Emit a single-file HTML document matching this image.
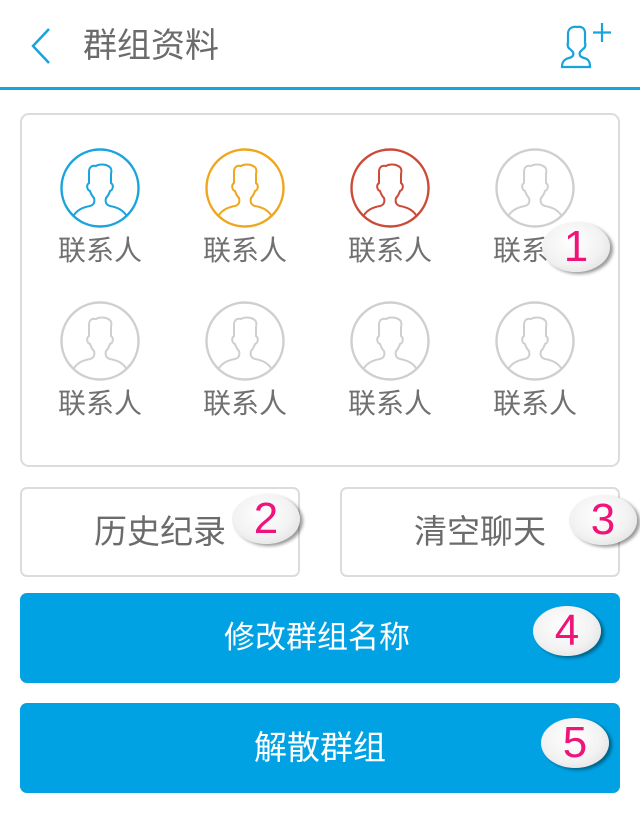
<!DOCTYPE html>
<html><head><meta charset="utf-8"><style>
*{margin:0;padding:0;box-sizing:border-box}
body{width:640px;height:828px;background:#fff;position:relative;overflow:hidden;font-family:"Liberation Sans","Noto Sans CJK SC",sans-serif}
.abs{position:absolute}
.title{left:83px;top:25px;font-size:34px;color:#6b6b6b;line-height:42px}
.line{left:0;top:87px;width:640px;height:3px;background:#18a3dd}
.box{left:20px;top:113px;width:600px;height:354px;border:2px solid #dcdcdc;border-radius:9px}
.av{width:80px;height:80px}
.lbl{width:140px;text-align:center;font-size:28px;color:#707070;line-height:30px}
.btn{border:2px solid #dcdcdc;border-radius:7px;font-size:33px;color:#6b6b6b;line-height:86px}
.blue{background:#00a2e3;border-radius:7px;color:#fff;font-size:31px;line-height:90px;width:600px;height:90px;left:20px}
.badge{width:68px;height:50px;border-radius:50%;background:radial-gradient(ellipse at 45% 40%,#fff 0%,#f2f2f2 55%,#d6d6d6 100%);box-shadow:3px 2px 3px rgba(0,0,0,.4);color:#f0147a;font-size:44px;text-align:center;line-height:50px;font-family:"Liberation Sans",sans-serif}
</style></head><body>
<svg class="abs" style="left:28px;top:26px" width="26" height="40"><path d="M21 3 L5 20 L21 37" fill="none" stroke="#18a3dd" stroke-width="2.5"/></svg>
<div class="abs title">群组资料</div>
<svg class="abs" style="left:558px;top:20px" width="66" height="52"><g fill="none" stroke="#18a3dd" stroke-width="2.2"><path d="M4 47 C4 41 7 39 11 38 C15 37 16 35 15 32 L12 29 C10 28 9 25 10 23 L10 14 C10 8 15 6 19 7 C23 6 27 8 27 13 L27 23 C28 25 27 28 25 29 L22 32 C21 35 22 37 26 38 C30 39 32 41 32 47 Z"/><path d="M44 3 V22 M35 12.5 H53"/></g></svg>
<div class="abs line"></div>
<div class="abs box"></div>
<svg width="0" height="0" style="position:absolute"><defs><g id="p"><circle cx="40" cy="40" r="38.5" fill="none" stroke-width="2.4"/><path d="M14 67 C18 61 24 59 30 58 C34 57 35 54 34 50 C32 48 31 46 30 43 C27 42 26 37 29 35 L29 24 C29 19 32 17 36 18 C39 16 45 16 48 18 C51 19 52 22 51 26 L51 35 C54 37 53 42 50 43 C49 46 48 48 46 50 C45 54 46 57 50 58 C56 59 62 61 66 67" fill="none" stroke-width="2"/></g></defs></svg>
<svg class="abs av" style="left:60px;top:148px" stroke="#1aa3dd"><use href="#p"/></svg>
<svg class="abs av" style="left:205px;top:148px" stroke="#f0a61c"><use href="#p"/></svg>
<svg class="abs av" style="left:350px;top:148px" stroke="#cc4a38"><use href="#p"/></svg>
<svg class="abs av" style="left:495px;top:148px" stroke="#cfcfcf"><use href="#p"/></svg>
<svg class="abs av" style="left:60px;top:301px" stroke="#cfcfcf"><use href="#p"/></svg>
<svg class="abs av" style="left:205px;top:301px" stroke="#cfcfcf"><use href="#p"/></svg>
<svg class="abs av" style="left:350px;top:301px" stroke="#cfcfcf"><use href="#p"/></svg>
<svg class="abs av" style="left:495px;top:301px" stroke="#cfcfcf"><use href="#p"/></svg>
<div class="abs lbl" style="left:30px;top:236px">联系人</div>
<div class="abs lbl" style="left:175px;top:236px">联系人</div>
<div class="abs lbl" style="left:320px;top:236px">联系人</div>
<div class="abs lbl" style="left:465px;top:236px">联系人</div>
<div class="abs lbl" style="left:30px;top:389px">联系人</div>
<div class="abs lbl" style="left:175px;top:389px">联系人</div>
<div class="abs lbl" style="left:320px;top:389px">联系人</div>
<div class="abs lbl" style="left:465px;top:389px">联系人</div>
<div class="abs badge" style="left:542px;top:222px">1</div>
<div class="abs btn" style="left:20px;top:487px;width:280px;height:90px;padding-left:72px">历史纪录</div>
<div class="abs btn" style="left:340px;top:487px;width:280px;height:90px;padding-left:72px">清空聊天</div>
<div class="abs badge" style="left:232px;top:494px">2</div>
<div class="abs badge" style="left:569px;top:495px">3</div>
<div class="abs blue" style="top:593px;padding-left:204px">修改群组名称</div>
<div class="abs blue" style="top:703px;padding-left:234px;font-size:33px">解散群组</div>
<div class="abs badge" style="left:533px;top:606px">4</div>
<div class="abs badge" style="left:541px;top:718px">5</div>
</body></html>
